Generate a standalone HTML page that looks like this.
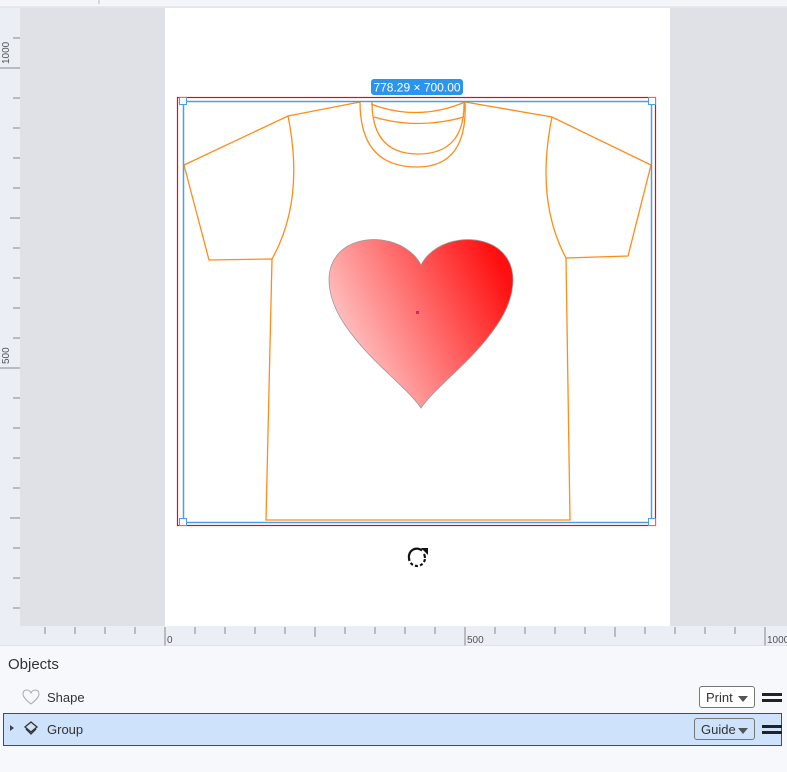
<!DOCTYPE html>
<html><head><meta charset="utf-8"><style>
body{margin:0;width:787px;height:772px;overflow:hidden;background:#f7f8fc;font-family:"Liberation Sans",sans-serif;position:relative}
.abs{position:absolute}
.dd{position:absolute;border:1px solid #777;border-radius:3px;background:#fff;font-size:13px;color:#333;height:22px;line-height:22px;padding-left:6px;box-sizing:border-box}
.dd i{position:absolute;right:6px;top:9px;width:0;height:0;border-left:5px solid transparent;border-right:5px solid transparent;border-top:6px solid #555}
.ham{position:absolute;width:20px;height:3px;border-top:3px solid #222;border-bottom:3px solid #222;box-sizing:content-box}
</style></head><body>
<svg class="abs" style="left:0;top:0" width="787" height="646" xmlns="http://www.w3.org/2000/svg">
<defs>
<linearGradient id="hg" x1="0" y1="0.75" x2="1" y2="0.3">
<stop offset="0" stop-color="#ffdcdc"/><stop offset="1" stop-color="#ff0f0f"/></linearGradient>
</defs>
<rect x="0" y="0" width="787" height="646" fill="#eceef6"/>
<rect x="0" y="0" width="787" height="7" fill="#f5f6fa"/>
<line x1="0" y1="7" x2="787" y2="7" fill="none" stroke="#d8dae2"/>
<line x1="99" y1="0" x2="99" y2="4" stroke="#bbb"/>
<rect x="20" y="8" width="767" height="618" fill="#e0e1e6"/>
<rect x="165" y="8" width="505" height="618" fill="#fff"/>
<g stroke="#888" stroke-width="1">
<line x1="13" y1="38" x2="20" y2="38"/><line x1="0" y1="68" x2="20" y2="68"/>
<line x1="13" y1="98" x2="20" y2="98"/><line x1="13" y1="128" x2="20" y2="128"/>
<line x1="13" y1="158" x2="20" y2="158"/><line x1="13" y1="188" x2="20" y2="188"/>
<line x1="10" y1="218" x2="20" y2="218"/><line x1="13" y1="248" x2="20" y2="248"/>
<line x1="13" y1="278" x2="20" y2="278"/><line x1="13" y1="308" x2="20" y2="308"/>
<line x1="13" y1="338" x2="20" y2="338"/><line x1="0" y1="368" x2="20" y2="368"/>
<line x1="13" y1="398" x2="20" y2="398"/><line x1="13" y1="428" x2="20" y2="428"/>
<line x1="13" y1="458" x2="20" y2="458"/><line x1="13" y1="488" x2="20" y2="488"/>
<line x1="10" y1="518" x2="20" y2="518"/><line x1="13" y1="548" x2="20" y2="548"/>
<line x1="13" y1="578" x2="20" y2="578"/><line x1="13" y1="608" x2="20" y2="608"/>
</g>
<g stroke="#888" stroke-width="1">
<line x1="45" y1="627" x2="45" y2="634"/><line x1="75" y1="627" x2="75" y2="634"/>
<line x1="105" y1="627" x2="105" y2="634"/><line x1="135" y1="627" x2="135" y2="634"/>
<line x1="165" y1="627" x2="165" y2="646"/><line x1="195" y1="627" x2="195" y2="634"/>
<line x1="225" y1="627" x2="225" y2="634"/><line x1="255" y1="627" x2="255" y2="634"/>
<line x1="285" y1="627" x2="285" y2="634"/><line x1="315" y1="627" x2="315" y2="637"/>
<line x1="345" y1="627" x2="345" y2="634"/><line x1="375" y1="627" x2="375" y2="634"/>
<line x1="405" y1="627" x2="405" y2="634"/><line x1="435" y1="627" x2="435" y2="634"/>
<line x1="465" y1="627" x2="465" y2="646"/><line x1="495" y1="627" x2="495" y2="634"/>
<line x1="525" y1="627" x2="525" y2="634"/><line x1="555" y1="627" x2="555" y2="634"/>
<line x1="585" y1="627" x2="585" y2="634"/><line x1="615" y1="627" x2="615" y2="637"/>
<line x1="645" y1="627" x2="645" y2="634"/><line x1="675" y1="627" x2="675" y2="634"/>
<line x1="705" y1="627" x2="705" y2="634"/><line x1="735" y1="627" x2="735" y2="634"/>
<line x1="765" y1="627" x2="765" y2="646"/>
</g>
<line x1="0" y1="646" x2="787" y2="646" stroke="#d8dae2"/>
<g font-size="10" fill="#555" font-family="Liberation Sans,sans-serif">
<text x="167" y="643">0</text><text x="467" y="643">500</text><text x="767" y="643">1000</text>
<text transform="translate(9,64) rotate(-90)">1000</text>
<text transform="translate(9,364) rotate(-90)">500</text>
</g>
<g fill="none" stroke="#ff8c1a" stroke-width="1.3">
<path d="M360 102 L288 116 L184 165 L209 260 L272 259 L266 520 L570 520 L566 258 L628 256 L651 165 L552 117 L465 102"/>
<path d="M288 116 Q305 200 272 259"/>
<path d="M552 117 Q535 200 566 258"/>
<path d="M360 102 Q360 167 417 167 Q468 167 465 102"/>
<path d="M372 102 Q372 154 418 154 Q465 154 464 102"/>
<path d="M371 104 Q418 122 465 102"/>
<path d="M374 117 Q418 130 464 117"/>
</g>
<path d="M421 265 C406 236 360 232 340 252 C322 270 328 300 345 325 C370 362 405 385 421 408 C437 385 472 362 497 325 C514 300 520 270 502 252 C482 232 436 236 421 265 Z" fill="url(#hg)" stroke="#999" stroke-width="0.8"/>
<rect x="416" y="311" width="3" height="3" fill="#e0206a"/>
<rect x="177.5" y="97.5" width="478" height="428" fill="none" stroke="#ff0000" stroke-width="1.2"/>
<rect x="183.5" y="101.5" width="468" height="421" fill="none" stroke="#4a9fe6" stroke-width="1.5"/>
<g fill="#fff" stroke="#4a9fe6" stroke-width="1"><rect x="179.5" y="97.5" width="7" height="7"/><rect x="648.5" y="97.5" width="7" height="7"/><rect x="179.5" y="518.5" width="7" height="7"/><rect x="648.5" y="518.5" width="7" height="7"/></g>
<rect x="371" y="79" width="92" height="16" rx="3" fill="#2b95ee"/>
<text x="417" y="91.5" text-anchor="middle" font-size="12" fill="#fff" font-family="Liberation Sans,sans-serif">778.29 × 700.00</text>
<g fill="none" stroke="#111" stroke-width="2.2">
<path d="M422 550.5 A8 8 0 0 0 409 558"/>
<path d="M409 558 A8 8 0 0 0 425 558" stroke-dasharray="3 2.2"/>
<path d="M425 558 A8 8 0 0 0 424 554"/>
</g>
<path d="M421 548 L428 548 L428 555 Z" fill="#111"/>
</svg>
<div class="abs" style="left:8px;top:656px;font-size:15px;color:#333">Objects</div>
<svg class="abs" style="left:22px;top:689px" width="18" height="17"><path d="M9 15 C4 11 1 8 1 5 C1 2 3 1 5 1 C7 1 8 2 9 4 C10 2 11 1 13 1 C15 1 17 2 17 5 C17 8 14 11 9 15Z" fill="none" stroke="#aaa"/></svg>
<div class="abs" style="left:47px;top:690px;font-size:13px;color:#333">Shape</div>
<div class="dd" style="left:699px;top:686px;width:56px">Print<i></i></div>
<div class="ham" style="left:762px;top:693px"></div>
<div class="abs" style="left:3px;top:713px;width:777px;height:31px;background:#cfe2fb;border:1px solid #ff0000"></div>
<div class="abs" style="left:10px;top:725px;width:0;height:0;border-top:3px solid transparent;border-bottom:3px solid transparent;border-left:4px solid #444"></div>
<svg class="abs" style="left:24px;top:721px" width="14" height="14"><path d="M7 1 L13 6 L7 11 L1 6 Z" fill="none" stroke="#333" stroke-width="1.3"/><path d="M2 8 L7 13 L12 8" fill="none" stroke="#333" stroke-width="1.3"/></svg>
<div class="abs" style="left:47px;top:722px;font-size:13px;color:#333">Group</div>
<div class="dd" style="left:694px;top:718px;width:61px;background:#cfe2fb">Guide<i></i></div>
<div class="ham" style="left:762px;top:725px"></div>
</body></html>
